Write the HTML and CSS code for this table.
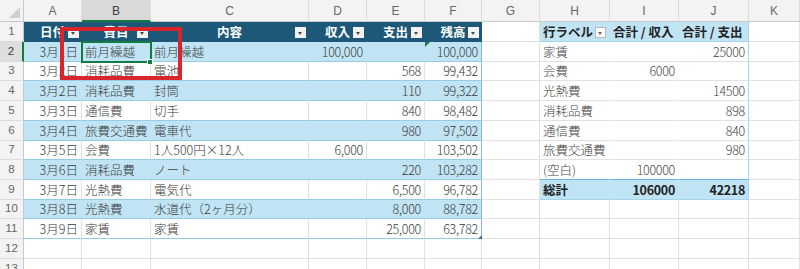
FILE: index.html
```html
<!DOCTYPE html>
<html lang="ja">
<head>
<meta charset="utf-8">
<title>Sheet</title>
<link rel="stylesheet" href="styles.css">
</head>
<body>
<div class="sheet">
  <!-- column headers -->
  <div class="corner"></div>
  <div class="c hd">A</div><div class="c hd on">B</div><div class="c hd">C</div><div class="c hd">D</div><div class="c hd">E</div><div class="c hd">F</div><div class="c hd">G</div><div class="c hd">H</div><div class="c hd">I</div><div class="c hd">J</div><div class="c hd">K</div>

  <!-- row 1 -->
  <div class="c rh">1</div>
  <div class="c th">日付<span class="dd"></span></div>
  <div class="c th">費目<span class="dd"></span></div>
  <div class="c th">内容<span class="dd"></span></div>
  <div class="c th">収入<span class="dd"></span></div>
  <div class="c th">支出<span class="dd"></span></div>
  <div class="c th">残高<span class="dd"></span></div>
  <div class="c"></div>
  <div class="c ph">行ラベル<span class="pdd"></span></div>
  <div class="c ph">合計 / 収入</div>
  <div class="c ph pj">合計 / 支出</div>
  <div class="c"></div>

  <!-- row 2 -->
  <div class="c rh on">2</div>
  <div class="c b r">3月1日</div><div class="c b">前月繰越</div><div class="c b">前月繰越</div><div class="c b r n">100,000</div><div class="c b r n"></div><div class="c b r n fc">100,000</div>
  <div class="c"></div>
  <div class="c pv">家賃</div><div class="c pv r n"></div><div class="c pv r n pj">25000</div>
  <div class="c"></div>

  <!-- row 3 -->
  <div class="c rh">3</div>
  <div class="c w r">3月2日</div><div class="c w">消耗品費</div><div class="c w">電池</div><div class="c w r n"></div><div class="c w r n">568</div><div class="c w r n fc">99,432</div>
  <div class="c"></div>
  <div class="c pv">会費</div><div class="c pv r n">6000</div><div class="c pv r n pj"></div>
  <div class="c"></div>

  <!-- row 4 -->
  <div class="c rh">4</div>
  <div class="c b r">3月2日</div><div class="c b">消耗品費</div><div class="c b">封筒</div><div class="c b r n"></div><div class="c b r n">110</div><div class="c b r n fc">99,322</div>
  <div class="c"></div>
  <div class="c pv">光熱費</div><div class="c pv r n"></div><div class="c pv r n pj">14500</div>
  <div class="c"></div>

  <!-- row 5 -->
  <div class="c rh">5</div>
  <div class="c w r">3月3日</div><div class="c w">通信費</div><div class="c w">切手</div><div class="c w r n"></div><div class="c w r n">840</div><div class="c w r n fc">98,482</div>
  <div class="c"></div>
  <div class="c pv">消耗品費</div><div class="c pv r n"></div><div class="c pv r n pj">898</div>
  <div class="c"></div>

  <!-- row 6 -->
  <div class="c rh">6</div>
  <div class="c b r">3月4日</div><div class="c b">旅費交通費</div><div class="c b">電車代</div><div class="c b r n"></div><div class="c b r n">980</div><div class="c b r n fc">97,502</div>
  <div class="c"></div>
  <div class="c pv">通信費</div><div class="c pv r n"></div><div class="c pv r n pj">840</div>
  <div class="c"></div>

  <!-- row 7 -->
  <div class="c rh">7</div>
  <div class="c w r">3月5日</div><div class="c w">会費</div><div class="c w">1人500円×12人</div><div class="c w r n">6,000</div><div class="c w r n"></div><div class="c w r n fc">103,502</div>
  <div class="c"></div>
  <div class="c pv">旅費交通費</div><div class="c pv r n"></div><div class="c pv r n pj">980</div>
  <div class="c"></div>

  <!-- row 8 -->
  <div class="c rh">8</div>
  <div class="c b r">3月6日</div><div class="c b">消耗品費</div><div class="c b">ノート</div><div class="c b r n"></div><div class="c b r n">220</div><div class="c b r n fc">103,282</div>
  <div class="c"></div>
  <div class="c pv pl">(空白)</div><div class="c pv pl r n">100000</div><div class="c pv pl r n pj"></div>
  <div class="c"></div>

  <!-- row 9 -->
  <div class="c rh">9</div>
  <div class="c w r">3月7日</div><div class="c w">光熱費</div><div class="c w">電気代</div><div class="c w r n"></div><div class="c w r n">6,500</div><div class="c w r n fc">96,782</div>
  <div class="c"></div>
  <div class="c pt">総計</div><div class="c pt r n">106000</div><div class="c pt r n pj">42218</div>
  <div class="c"></div>

  <!-- row 10 -->
  <div class="c rh">10</div>
  <div class="c b r">3月8日</div><div class="c b">光熱費</div><div class="c b">水道代（2ヶ月分）</div><div class="c b r n"></div><div class="c b r n">8,000</div><div class="c b r n fc">88,782</div>
  <div class="c"></div><div class="c"></div><div class="c"></div><div class="c"></div><div class="c"></div>

  <!-- row 11 -->
  <div class="c rh">11</div>
  <div class="c w r">3月9日</div><div class="c w">家賃</div><div class="c w">家賃</div><div class="c w r n"></div><div class="c w r n">25,000</div><div class="c w r n fc">63,782</div>
  <div class="c"></div><div class="c"></div><div class="c"></div><div class="c"></div><div class="c"></div>

  <!-- row 12 -->
  <div class="c rh">12</div>
  <div class="c"></div><div class="c"></div><div class="c"></div><div class="c"></div><div class="c"></div><div class="c"></div><div class="c"></div><div class="c"></div><div class="c"></div><div class="c"></div><div class="c"></div>

  <!-- row 13 -->
  <div class="c rh">13</div>
  <div class="c"></div><div class="c"></div><div class="c"></div><div class="c"></div><div class="c"></div><div class="c"></div><div class="c"></div><div class="c"></div><div class="c"></div><div class="c"></div><div class="c"></div>

  <!-- overlays -->
  <div class="err"></div>
  <div class="rs"></div>
  <div class="selbox"></div>
  <div class="fill"></div>
  <div class="redbox"></div>
</div>
</body>
</html>
```

FILE: styles.css
```css
html, body {
  margin: 0;
  padding: 0;
  background: #ffffff;
  overflow: hidden;
}

body {
  font-family: "Noto Sans CJK JP", "Noto Sans", sans-serif;
}

.sheet {
  position: relative;
  width: 800px;
  display: grid;
  grid-template-columns: 24px 58px 69px 158px 58px 58px 57px 58px 70px 69px 70px 51px;
  grid-template-rows: 22px 20px 20px 19px 20px 20px 20px 19px 20px 20px 19px 20px 20px 20px;
}

.c {
  position: relative;
  box-sizing: border-box;
  display: flex;
  align-items: center;
  padding: 1px 3px 0 3px;
  border-right: 1px solid #e1e1e1;
  border-bottom: 1px solid #e1e1e1;
  font-size: 12.5px;
  font-weight: 300;
  line-height: 1;
  color: #3a3a3a;
  white-space: nowrap;
}

.corner {
  position: relative;
  box-sizing: border-box;
  background: #f3f3f3;
  border-right: 1px solid #c8c8c8;
  border-bottom: 1px solid #c8c8c8;
}

.corner::after {
  content: "";
  position: absolute;
  right: 3px;
  bottom: 3px;
  width: 0;
  height: 0;
  border-left: 11px solid transparent;
  border-bottom: 11px solid #cfcfcf;
}

/* column headers */
.hd {
  justify-content: center;
  background: #f3f3f3;
  color: #666666;
  font-size: 12px;
  font-weight: 400;
  font-family: "Liberation Sans", "Noto Sans CJK JP", sans-serif;
  border-right-color: #dcdcdc;
  border-bottom-color: #c8c8c8;
}

.hd.on {
  background: #d9d9d9;
  color: #3d3d3d;
  border-bottom: 2px solid #107c41;
}

/* row headers */
.rh {
  justify-content: center;
  padding: 0;
  background: #f3f3f3;
  color: #666666;
  font-size: 11.5px;
  font-weight: 400;
  font-family: "Liberation Sans", "Noto Sans CJK JP", sans-serif;
  border-right-color: #c8c8c8;
  border-bottom-color: #dcdcdc;
}

.rh.on {
  background: #dedede;
  color: #3d3d3d;
  border-right: 2px solid #107c41;
}

/* main table */
.th {
  justify-content: center;
  background: #1d5878;
  color: #ffffff;
  font-weight: bold;
  border-right-color: #1d5878;
  border-bottom-color: #1d5878;
}

.dd {
  position: absolute;
  right: 2px;
  bottom: 3px;
  width: 11px;
  height: 11px;
  background: #f2f2f2;
}

.dd::after {
  content: "";
  position: absolute;
  left: 3px;
  top: 5px;
  width: 0;
  height: 0;
  border-left: 2.5px solid transparent;
  border-right: 2.5px solid transparent;
  border-top: 3px solid #4a4a4a;
}

.b {
  background: #c1e4f5;
  border-right-color: #c1e4f5;
  border-bottom-color: #96cae5;
}

.w {
  border-bottom-color: #96cae5;
}

.r {
  justify-content: flex-end;
}

.n {
  letter-spacing: -0.3px;
}

.fc {
  border-right-color: #7fbde0;
}

/* pivot table */
.ph {
  background: #c1e4f5;
  color: #222222;
  font-weight: bold;
  border-right-color: #c1e4f5;
  border-bottom-color: #a6d4ec;
}

.pdd {
  position: absolute;
  right: 3px;
  bottom: 3px;
  width: 11px;
  height: 11px;
  box-sizing: border-box;
  background: #ffffff;
  border: 1px solid #b9b9b9;
}

.pdd::after {
  content: "";
  position: absolute;
  left: 2px;
  top: 4px;
  width: 0;
  height: 0;
  border-left: 2.5px solid transparent;
  border-right: 2.5px solid transparent;
  border-top: 3px solid #666666;
}

.pv {
  color: #444444;
  border-right-color: #ffffff;
}

.pl {
  border-bottom-color: #6fb3da;
}

.pt {
  background: #c1e4f5;
  color: #222222;
  font-weight: bold;
  border-right-color: #c1e4f5;
  border-bottom-color: #a6d4ec;
}

.pj {
  border-right-color: #a6d4ec;
}

/* overlays */
.err {
  position: absolute;
  left: 425px;
  top: 42px;
  width: 0;
  height: 0;
  border-top: 5px solid #1f7a45;
  border-right: 5px solid transparent;
}

.rs {
  position: absolute;
  left: 478px;
  top: 235px;
  width: 0;
  height: 0;
  border-left: 4px solid transparent;
  border-bottom: 4px solid #3e67a0;
}

.selbox {
  position: absolute;
  left: 81px;
  top: 41px;
  width: 71px;
  height: 22px;
  box-sizing: border-box;
  border: 2px solid #107c41;
}

.fill {
  position: absolute;
  left: 147px;
  top: 59px;
  width: 4px;
  height: 4px;
  background: #107c41;
  border: 1px solid #ffffff;
}

.redbox {
  position: absolute;
  left: 60px;
  top: 27px;
  width: 122px;
  height: 53px;
  box-sizing: border-box;
  border: 4px solid #d8262c;
}
```
